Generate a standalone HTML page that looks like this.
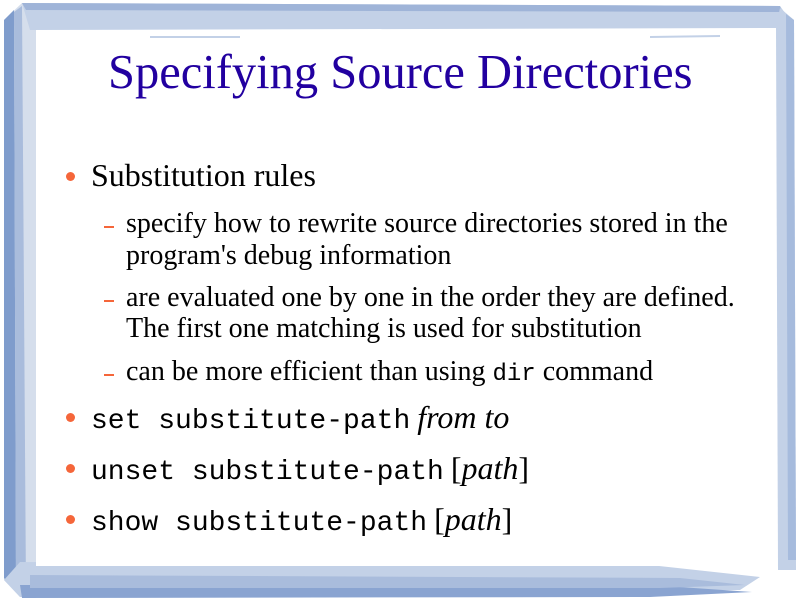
<!DOCTYPE html>
<html><head><meta charset="utf-8"><style>
body{margin:0;width:800px;height:600px;overflow:hidden;background:#fff;position:relative;font-family:"Liberation Serif",serif}
.t{position:absolute;white-space:nowrap;line-height:1}
.m{font-family:"Liberation Mono",monospace}
.dot{position:absolute;width:9px;height:9px;border-radius:50%;background:#f5663a}
.dash{position:absolute;width:10px;height:1.5px;background:#f5663a}
</style></head><body>
<svg width="800" height="600" style="position:absolute;left:0;top:0">
<polygon points="4,20 22,3 36,3 36,585 20,597 4,580" fill="#d5deec"/>
<polygon points="4,20 14,10 16,590 4,578" fill="#7f9ccc"/>
<polygon points="14,12 22,6 26,592 16,592" fill="#a9bcdc"/>
<polygon points="22,3 780,6 790,20 780,28 30,30" fill="#c3d1e7"/>
<polygon points="22,3 780,6 782,12 26,10" fill="#9fb4d8"/>
<polygon points="780,8 794,20 796,570 778,570 776,26" fill="#c3d1e7"/>
<polygon points="786,14 794,20 796,560 788,560" fill="#a6bbdd"/>
<polygon points="20,562 650,565 760,577 740,590 20,597 4,580" fill="#c3d1e7"/>
<polygon points="20,585 650,585 752,592 650,597 22,598" fill="#8aa4d1"/>
<polygon points="30,575 680,578 745,585 660,588 30,588" fill="#a9bcdc"/>
<rect x="36" y="30" width="740" height="536" fill="#fff"/>
<line x1="150" y1="37" x2="240" y2="37" stroke="#c3d1e7" stroke-width="2"/>
<line x1="650" y1="37" x2="720" y2="36" stroke="#c3d1e7" stroke-width="2"/>
</svg>
<div class="t" style="left:108px;top:49px;font-size:48.5px;color:#2200a0">Specifying Source Directories</div>
<div class="dot" style="left:66px;top:172px"></div>
<div class="t" style="left:91px;top:159px;font-size:32px">Substitution rules</div>
<div class="dash" style="left:104px;top:226px"></div>
<div class="t" style="left:126px;top:210px;font-size:28px">specify how to rewrite source directories stored in the</div>
<div class="t" style="left:126px;top:242px;font-size:28px">program's debug information</div>
<div class="dash" style="left:104px;top:300px"></div>
<div class="t" style="left:126px;top:284px;font-size:28px">are evaluated one by one in the order they are defined.</div>
<div class="t" style="left:126px;top:315px;font-size:28px">The first one matching is used for substitution</div>
<div class="dash" style="left:104px;top:374px"></div>
<div class="t" style="left:126px;top:358px;font-size:28px">can be more efficient than using <span class="m" style="font-size:24px">dir</span> command</div>
<div class="dot" style="left:66px;top:413px"></div>
<div class="t" style="left:91px;top:401px;font-size:28px"><span class="m">set substitute-path</span> <i style="font-size:32px">from to</i></div>
<div class="dot" style="left:66px;top:464px"></div>
<div class="t" style="left:91px;top:452px;font-size:28px"><span class="m">unset substitute-path</span> <span style="font-size:32px">[<i>path</i>]</span></div>
<div class="dot" style="left:66px;top:515px"></div>
<div class="t" style="left:91px;top:503px;font-size:28px"><span class="m">show substitute-path</span> <span style="font-size:32px">[<i>path</i>]</span></div>
</body></html>
